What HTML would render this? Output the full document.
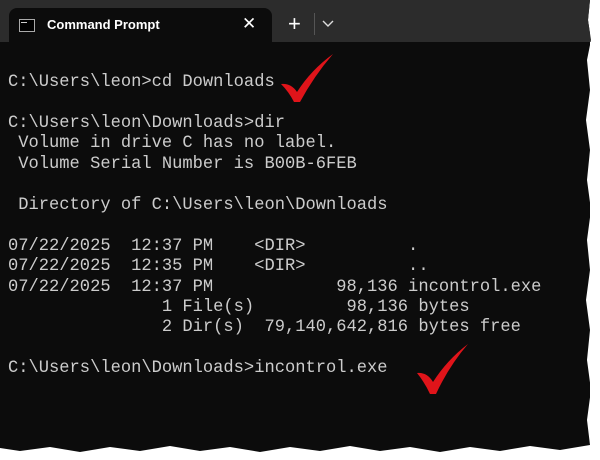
<!DOCTYPE html>
<html><head><style>
html,body{margin:0;padding:0;background:#fff;width:600px;height:460px;overflow:hidden}
#win{position:absolute;left:0;top:0;width:590px;height:452px;background:#0c0c0c;
clip-path:polygon(0 0,590px 0,588px 20px,591px 40px,587px 60px,590px 90px,586px 120px,590px 150px,587px 180px,591px 210px,587px 240px,590px 270px,586px 300px,590px 330px,587px 360px,591px 390px,587px 420px,590px 445px,560px 450px,530px 446px,500px 451px,470px 447px,440px 452px,410px 447px,380px 451px,350px 446px,320px 451px,290px 447px,260px 452px,230px 447px,200px 451px,170px 446px,140px 451px,110px 447px,80px 452px,50px 447px,20px 451px,0 448px)}
#bar{position:absolute;left:0;top:0;width:600px;height:42px;background:#2c2c2c}
#tab{position:absolute;left:9px;top:8px;width:263px;height:34px;background:#0c0c0c;border-radius:8px 8px 0 0}
.t{position:absolute;font-family:"Liberation Sans",sans-serif;color:#fff;font-size:13px;font-weight:bold}
pre{position:absolute;left:8px;top:73px;margin:0;font-family:"Liberation Mono",monospace;font-size:17.1px;line-height:20.45px;color:#cccccc}
</style></head><body>
<div id="win">
<div id="bar"></div>
<div id="tab"></div>
<div style="position:absolute;left:19px;top:19px;width:14px;height:11px;border:1px solid #aaa;background:#000"></div>
<div style="position:absolute;left:21px;top:22px;width:6px;height:1px;background:#ccc"></div>
<div class="t" style="left:47px;top:17px">Command Prompt</div>
<div class="t" style="left:242px;top:14px;font-weight:normal;font-size:17px">✕</div>
<div class="t" style="left:288px;top:11px;font-weight:normal;font-size:22px">+</div>
<div style="position:absolute;left:314px;top:13px;width:1px;height:22px;background:#555"></div>
<svg style="position:absolute;left:322px;top:20px" width="12" height="8"><path d="M1 1L6 6L11 1" stroke="#ddd" stroke-width="1.4" fill="none"/></svg>
<pre>C:\Users\leon>cd Downloads

C:\Users\leon\Downloads>dir
 Volume in drive C has no label.
 Volume Serial Number is B00B-6FEB

 Directory of C:\Users\leon\Downloads

07/22/2025  12:37 PM    &lt;DIR&gt;          .
07/22/2025  12:35 PM    &lt;DIR&gt;          ..
07/22/2025  12:37 PM            98,136 incontrol.exe
               1 File(s)         98,136 bytes
               2 Dir(s)  79,140,642,816 bytes free

C:\Users\leon\Downloads>incontrol.exe</pre>
<svg style="position:absolute;left:0;top:0" width="600" height="460">
<path d="M281 84Q291 83 297 92Q311 70 333 54Q314 76 300 102L294 102Q289 92 281 84Z" fill="#e0141a"/>
<path d="M417 373Q427 372 433 382Q447 360 468 344Q449 366 436 394L430 394Q425 383 417 373Z" fill="#e0141a"/>
</svg>
</div>
</body></html>
